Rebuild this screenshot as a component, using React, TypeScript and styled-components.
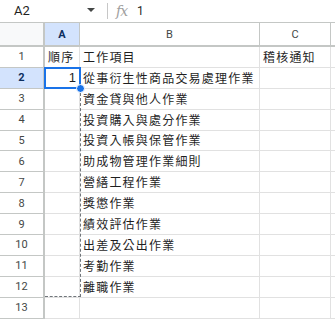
import React from "react";
import styled, { createGlobalStyle } from "styled-components";

const Global = createGlobalStyle`
  html, body { margin: 0; padding: 0; background: #fff; }
  body { font-family: Roboto, "Liberation Sans", Arial, sans-serif; }
`;

const ROW_H = 20.9;
const HEAD_H = 24;
const COLS = [45, 35, 180, 71, 10];

const Page = styled.div`
  width: 335px;
  height: 325px;
  overflow: hidden;
  background: #fff;
`;

const FormulaBar = styled.div`
  height: 22px;
  display: flex;
  align-items: center;
  color: #1f1f1f;
  font-size: 13px;
`;

const NameBox = styled.div`
  width: 66px;
  padding-left: 14px;
  box-sizing: border-box;
  line-height: 18px;
`;

const Caret = styled.div`
  width: 0;
  height: 0;
  border-left: 4px solid transparent;
  border-right: 4px solid transparent;
  border-top: 4px solid #444746;
  margin-left: 21px;
  margin-top: -2px;
`;

const Divider = styled.div`
  width: 1px;
  height: 16px;
  background: #c7c7c7;
  margin-left: 12px;
`;

const Fx = styled.span`
  font-family: "DejaVu Serif", "Liberation Serif", serif;
  font-style: italic;
  color: #a0a0a0;
  font-size: 14px;
  margin-left: 8px;
  letter-spacing: -1px;
`;

const FormulaValue = styled.span`
  margin-left: 10px;
  font-size: 12px;
`;

const GridWrap = styled.div`
  position: relative;
`;

const Grid = styled.div`
  display: grid;
  grid-template-columns: ${COLS.map((c) => c + "px").join(" ")};
  grid-template-rows: ${HEAD_H}px repeat(13, ${ROW_H}px);
  border-top: 1px solid #c4c7c5;
`;

const Corner = styled.div`
  background: #f8f9fa;
  border-right: 2px solid #c4c7c5;
  border-bottom: 2px solid #c4c7c5;
  box-sizing: border-box;
`;

const ColHead = styled.div<{ $active?: boolean }>`
  background: ${(p) => (p.$active ? "#d3e3fd" : "#fff")};
  border-right: 1px solid #c4c7c5;
  border-bottom: 2px solid #c4c7c5;
  box-sizing: border-box;
  display: flex;
  align-items: center;
  justify-content: center;
  font-size: 11px;
  font-weight: ${(p) => (p.$active ? 700 : 400)};
  color: ${(p) => (p.$active ? "#0b2e5f" : "#444746")};
`;

const RowHead = styled.div<{ $active?: boolean }>`
  background: ${(p) => (p.$active ? "#d3e3fd" : "#fff")};
  border-right: 2px solid #c4c7c5;
  border-bottom: 1px solid #c4c7c5;
  box-sizing: border-box;
  display: flex;
  align-items: center;
  justify-content: center;
  font-size: 11px;
  font-weight: ${(p) => (p.$active ? 700 : 400)};
  color: ${(p) => (p.$active ? "#0b2e5f" : "#444746")};
`;

const Cell = styled.div<{ $num?: boolean }>`
  border-right: 1px solid #e1e1e1;
  border-bottom: 1px solid #e1e1e1;
  box-sizing: border-box;
  display: flex;
  align-items: flex-end;
  justify-content: ${(p) => (p.$num ? "flex-end" : "flex-start")};
  padding: 0 3px 2px 3px;
  white-space: nowrap;
  overflow: visible;
  font-family: ${(p) =>
    p.$num
      ? 'Arial, "Liberation Sans", sans-serif'
      : '"Noto Sans CJK TC", "Noto Sans CJK SC", sans-serif'};
  font-size: ${(p) => (p.$num ? "13px" : "12px")};
  letter-spacing: ${(p) => (p.$num ? "0" : "1.2px")};
  color: #1f1f1f;
  line-height: 16px;
`;

const Selection = styled.div`
  position: absolute;
  left: 44px;
  top: ${HEAD_H + ROW_H}px;
  width: 37px;
  height: ${ROW_H + 1}px;
  border: 2px solid #1a73e8;
  box-sizing: border-box;
  pointer-events: none;
`;

const Marquee = styled.div`
  position: absolute;
  left: 45px;
  top: ${HEAD_H + ROW_H * 2}px;
  width: 36px;
  height: ${ROW_H * 10}px;
  border-right: 1px dashed #70757a;
  border-bottom: 1px dashed #70757a;
  box-sizing: border-box;
  pointer-events: none;
`;

const Handle = styled.div`
  position: absolute;
  left: 76px;
  top: ${HEAD_H + ROW_H * 2 - 4}px;
  width: 9px;
  height: 9px;
  border-radius: 50%;
  background: #1a73e8;
  border: 1px solid #fff;
  box-sizing: border-box;
`;

const items: [string, string, string][] = [
  ["順序", "工作項目", "稽核通知"],
  ["1", "從事衍生性商品交易處理作業", ""],
  ["", "資金貸與他人作業", ""],
  ["", "投資購入與處分作業", ""],
  ["", "投資入帳與保管作業", ""],
  ["", "助成物管理作業細則", ""],
  ["", "營繕工程作業", ""],
  ["", "獎懲作業", ""],
  ["", "績效評估作業", ""],
  ["", "出差及公出作業", ""],
  ["", "考勤作業", ""],
  ["", "離職作業", ""],
  ["", "", ""],
];

export default function App() {
  return (
    <Page>
      <Global />
      <FormulaBar>
        <NameBox>A2</NameBox>
        <Caret />
        <Divider />
        <Fx>fx</Fx>
        <FormulaValue>1</FormulaValue>
      </FormulaBar>
      <GridWrap>
        <Grid>
          <Corner />
          <ColHead $active>A</ColHead>
          <ColHead>B</ColHead>
          <ColHead>C</ColHead>
          <ColHead />
          {items.map((r, i) => (
            <React.Fragment key={i}>
              <RowHead $active={i === 1}>{i + 1}</RowHead>
              <Cell $num={i !== 0}>{r[0]}</Cell>
              <Cell>{r[1]}</Cell>
              <Cell>{r[2]}</Cell>
              <Cell />
            </React.Fragment>
          ))}
        </Grid>
        <Marquee />
        <Selection />
        <Handle />
      </GridWrap>
    </Page>
  );
}
